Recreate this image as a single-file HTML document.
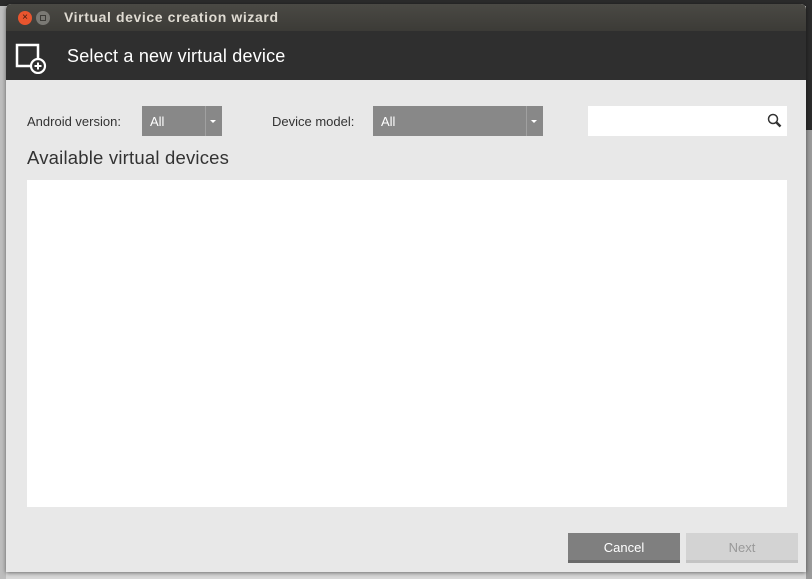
<!DOCTYPE html>
<html><head><style>
body{margin:0;width:812px;height:579px;overflow:hidden;background:#d8d8d8;position:relative;font-family:"Liberation Sans",sans-serif}
.abs{position:absolute}
</style></head><body>
<div class="abs" style="left:0;top:0;width:812px;height:6px;background:#2b2b2b"></div>
<div class="abs" style="left:806px;top:0;width:6px;height:130px;background:#2b2b2b"></div>
<div class="abs" style="left:806px;top:130px;width:6px;height:449px;background:#9a9a9a"></div>
<div class="abs" style="left:0;top:6px;width:6px;height:573px;background:#bdbdbd"></div>
<div class="abs" style="left:6px;top:4px;width:800px;height:568px;background:#e8e8e8;box-shadow:0 1px 4px rgba(0,0,0,.5);border-radius:5px 5px 0 0;overflow:hidden">
  <div class="abs" style="left:0;top:0;width:800px;height:27px;background:linear-gradient(#4a4944,#3c3b37)"></div>
  <div class="abs" style="left:12px;top:7px;width:14px;height:14px;border-radius:50%;background:#e9552e;color:#3a1a10;font-size:10px;line-height:14px;text-align:center">×</div>
  <div class="abs" style="left:30px;top:7px;width:14px;height:14px;border-radius:50%;background:#7a7974"><div class="abs" style="left:4px;top:4px;width:4px;height:4px;border:1px solid #3c3b37"></div></div>
  <div class="abs" style="left:58px;top:5px;color:#dfdbd2;font-size:14px;font-weight:bold;letter-spacing:.6px">Virtual device creation wizard</div>
  <div class="abs" style="left:0;top:27px;width:800px;height:49px;background:#2f2f2f"></div>
  <svg class="abs" style="left:9px;top:38px" width="40" height="32"><rect x="2" y="3" width="21" height="21" fill="none" stroke="#fff" stroke-width="2.5"/><circle cx="23" cy="24" r="7" fill="#2f2f2f" stroke="#fff" stroke-width="2.2"/><path d="M23 20.5v7M19.5 24h7" stroke="#fff" stroke-width="2"/></svg>
  <div class="abs" style="left:61px;top:42px;color:#fff;font-size:18px;letter-spacing:.2px">Select a new virtual device</div>
  <div class="abs" style="left:21px;top:110px;color:#333;font-size:13px">Android version:</div>
  <div class="abs" style="left:136px;top:102px;width:80px;height:30px;background:#888"></div>
  <div class="abs" style="left:199px;top:102px;width:1px;height:30px;background:#a0a0a0"></div>
  <div class="abs" style="left:144px;top:110px;color:#fff;font-size:13px">All</div>
  <div class="abs" style="left:204px;top:116px;border:3px solid transparent;border-top:3px solid #fff"></div>
  <div class="abs" style="left:266px;top:110px;color:#333;font-size:13px">Device model:</div>
  <div class="abs" style="left:367px;top:102px;width:170px;height:30px;background:#888"></div>
  <div class="abs" style="left:520px;top:102px;width:1px;height:30px;background:#a0a0a0"></div>
  <div class="abs" style="left:375px;top:110px;color:#fff;font-size:13px">All</div>
  <div class="abs" style="left:525px;top:116px;border:3px solid transparent;border-top:3px solid #fff"></div>
  <div class="abs" style="left:582px;top:102px;width:199px;height:30px;background:#fff"></div>
  <svg class="abs" style="left:761px;top:109px" width="16" height="16"><circle cx="6" cy="6" r="4.5" fill="none" stroke="#333" stroke-width="1.5"/><path d="M9.5 9.5l4 4" stroke="#333" stroke-width="2.5"/></svg>
  <div class="abs" style="left:21px;top:143px;color:#333;font-size:18.5px;letter-spacing:.2px">Available virtual devices</div>
  <div class="abs" style="left:21px;top:176px;width:760px;height:327px;background:#fff"></div>
  <div class="abs" style="left:562px;top:529px;width:112px;height:30px;background:#7f7f7f;border-bottom:3px solid #6a6a6a;box-sizing:border-box;color:#fff;font-size:13px;text-align:center;line-height:29px">Cancel</div>
  <div class="abs" style="left:680px;top:529px;width:112px;height:30px;background:#d3d3d3;border-bottom:3px solid #c4c4c4;box-sizing:border-box;color:#999;font-size:13px;text-align:center;line-height:29px">Next</div>
</div>
</body></html>
